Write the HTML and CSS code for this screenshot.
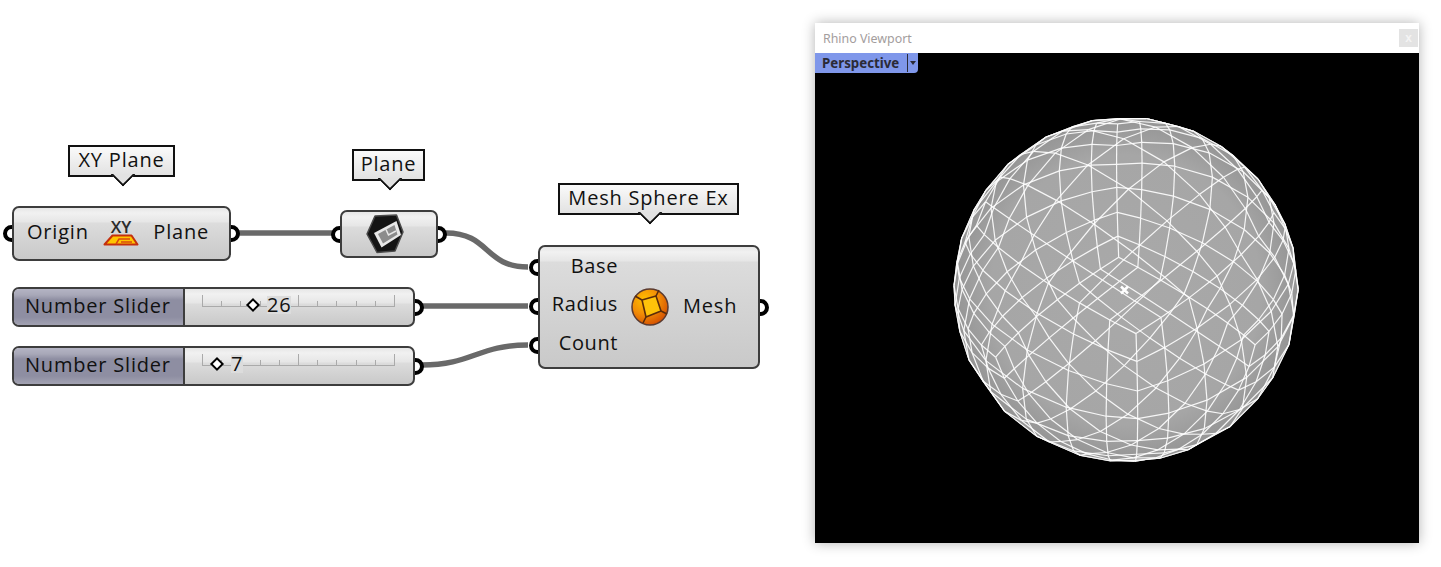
FILE: index.html
```html
<!DOCTYPE html>
<html lang="en">
<head>
    <meta charset="UTF-8">
    <title>Mesh Sphere Ex</title>
    <link rel="stylesheet" href="styles.css">
</head>
<body>
<div class="stage">
    <!-- Wires -->
    <svg class="wires" width="800" height="567" viewBox="0 0 800 567">
        <path d="M238 233 H332"/>
        <path d="M446 233 C490 233 484 267 528 267"/>
        <path d="M422 306 H528"/>
        <path d="M422 365 C472 365 478 345 528 345"/>
    </svg>

    <!-- XY Plane -->
    <div class="tip tip-xy"><span class="label">XY Plane</span></div>
    <div class="node node-xy">
        <span class="port port-in"></span>
        <span class="port port-out"></span>
        <span class="label">Origin</span>
        <div class="xy-icon">
            <span class="xy-letters">XY</span>
            <svg width="36" height="12" viewBox="0 0 36 12">
                <path d="M9.5 1.5 H28.5 L34.5 10.5 H1.5 Z" fill="#ffc400" stroke="#c5300c" stroke-width="2" stroke-linejoin="round"/>
                <path d="M13 10 L16 5 H27 M18 8 H29" fill="none" stroke="#d9480f" stroke-width="1.5"/>
            </svg>
        </div>
        <span class="label">Plane</span>
    </div>

    <!-- Plane -->
    <div class="tip tip-plane"><span class="label">Plane</span></div>
    <div class="node node-plane">
        <span class="port port-in"></span>
        <span class="port port-out"></span>
        <svg width="38" height="40" viewBox="0 0 38 40">
            <path d="M9 2 L30.5 1 L37 18 L29 37 L11 38.5 L1 20 Z" fill="#141414" stroke="#4a4a4a" stroke-width="1.5" stroke-linejoin="round"/>
            <path d="M8 19 L30.5 7 L35 21 L15.5 33.5 Z" fill="#e8e8e8"/>
            <path d="M12 20 L28.5 11 L31.5 20.5 L17 29.5 Z" fill="#8c8c8c"/>
            <path d="M20 15.5 L22.5 21 L30 17" fill="none" stroke="#e8e8e8" stroke-width="1.5"/>
        </svg>
    </div>

    <!-- Mesh Sphere Ex -->
    <div class="tip tip-mesh"><span class="label">Mesh Sphere Ex</span></div>
    <div class="node node-mesh">
        <span class="port port-in port-base"></span>
        <span class="port port-in port-radius"></span>
        <span class="port port-in port-count"></span>
        <span class="port port-out"></span>
        <div class="inputs">
            <span>Base</span>
            <span>Radius</span>
            <span>Count</span>
        </div>
        <svg class="mesh-icon" width="40" height="40" viewBox="0 0 40 40">
            <defs>
                <radialGradient id="ball" cx="35%" cy="30%" r="80%">
                    <stop offset="0" stop-color="#ffc000"/>
                    <stop offset="0.5" stop-color="#f28c06"/>
                    <stop offset="1" stop-color="#cf4600"/>
                </radialGradient>
            </defs>
            <circle cx="20" cy="20" r="18" fill="url(#ball)" stroke="#5a3a30" stroke-width="1.5"/>
            <path d="M12 13 L26 9 L31 24 L16 30 Z" fill="#ffc30a" stroke="#5b2c0a" stroke-width="1.6" stroke-linejoin="round"/>
            <path d="M12 13 L5 9 M26 9 L29 3 M31 24 L37 27 M16 30 L13 36" stroke="#5b2c0a" stroke-width="1.6"/>
        </svg>
        <span class="label output">Mesh</span>
    </div>

    <!-- Number sliders -->
    <div class="node slider slider-radius">
        <span class="port port-out"></span>
        <div class="slider-name"><span class="label">Number Slider</span></div>
        <div class="slider-track">
            <div class="ticks">
                <i class="major"></i><i></i><i></i><i></i><i></i><i class="major"></i><i></i><i></i><i></i><i></i><i class="major"></i>
            </div>
            <div class="thumb" style="left:62px">
                <b class="diamond"></b><span>26</span>
            </div>
        </div>
    </div>
    <div class="node slider slider-count">
        <span class="port port-out"></span>
        <div class="slider-name"><span class="label">Number Slider</span></div>
        <div class="slider-track">
            <div class="ticks">
                <i class="major"></i><i></i><i></i><i></i><i></i><i class="major"></i><i></i><i></i><i></i><i></i><i class="major"></i>
            </div>
            <div class="thumb" style="left:26px">
                <b class="diamond"></b><span>7</span>
            </div>
        </div>
    </div>

    <!-- Viewport window -->
    <div class="viewport">
        <div class="title-bar">
            <span>Rhino Viewport</span>
            <button class="close">x</button>
        </div>
        <div class="view">
            <div class="view-tab">
                <span class="view-name">Perspective</span>
                <span class="view-arrow"></span>
            </div>
            <svg id="sphere" class="sphere" width="604" height="490" viewBox="0 0 604 490"></svg>
        </div>
    </div>
</div>
<script src="sphere.js"></script>
</body>
</html>
```

FILE: styles.css
```css
* {
    box-sizing: border-box;
}

html, body {
    margin: 0;
    padding: 0;
    background-color: #fff;
}

.stage {
    position: relative;
    isolation: isolate;
    width: 1441px;
    height: 567px;
    overflow: hidden;
    font-family: "Open Sans", Arial, sans-serif;
    font-size: 20px;
    letter-spacing: 0.8px;
    color: #111;
}

/* Open Sans sits low, lift the labels to the middle */
.label {
    margin-bottom: 4px;
}

.wires {
    position: absolute;
    left: 0;
    top: 0;
    z-index: -2;
}

.wires path {
    fill: none;
    stroke: #696969;
    stroke-width: 5.5;
}

/* Tooltips */
.tip {
    position: absolute;
    display: flex;
    align-items: center;
    justify-content: center;
    height: 32px;
    border: 2px solid #111;
    background: linear-gradient(#fafafa, #e2e2e2);
}

.tip::after {
    content: "";
    position: absolute;
    left: 50%;
    bottom: -8px;
    width: 16px;
    height: 16px;
    margin-left: -8px;
    border-right: 2px solid #111;
    border-bottom: 2px solid #111;
    background: #e2e2e2;
    clip-path: polygon(100% 0, 100% 100%, 0 100%);
    transform: rotate(45deg);
}

.tip-xy { left: 68px; top: 145px; width: 107px; }
.tip-plane { left: 352px; top: 149px; width: 73px; }
.tip-mesh { left: 558px; top: 183px; width: 181px; }

/* Nodes */
.node {
    position: absolute;
    display: flex;
    align-items: center;
    border: 2px solid #3d3d3d;
    border-radius: 7px;
    background: linear-gradient(#e6e6e6, #f1f1f1 5px, #e6e6e6 14px, #dcdcdc 15px, #c9c9c9);
}

.node-xy {
    left: 12px;
    top: 206px;
    width: 219px;
    height: 55px;
    justify-content: space-between;
    padding: 0 20px 0 13px;
}

.node-plane {
    left: 340px;
    top: 210px;
    width: 98px;
    height: 48px;
    justify-content: center;
    padding-right: 9px;
}

.node-mesh {
    left: 538px;
    top: 245px;
    width: 222px;
    height: 124px;
    padding-left: 12px;
}

.inputs {
    display: flex;
    flex-direction: column;
    align-items: flex-end;
    width: 66px;
    margin-bottom: 5px;
    line-height: 38.5px;
    letter-spacing: 0.6px;
}

.mesh-icon {
    margin-left: 12px;
}

.output {
    margin-left: 13px;
}

/* Ports sit half under the node */
.port {
    position: absolute;
    top: 50%;
    z-index: -1;
    width: 17px;
    height: 17px;
    margin-top: -8.5px;
    border: 4px solid #000;
    border-radius: 50%;
    background-color: #fff;
}

.port-in { left: -11px; }
.port-out { right: -11px; }
.port-base { top: 20px; }
.port-radius { top: 59px; }
.port-count { top: 98px; }

.xy-icon {
    display: flex;
    flex-direction: column;
    align-items: center;
    width: 36px;
    margin-top: -2px;
}

.xy-letters {
    font-size: 17px;
    font-weight: 600;
    line-height: 14px;
    letter-spacing: 0;
    color: #2b2b2b;
}

/* Sliders */
.slider {
    left: 12px;
    width: 403px;
    height: 40px;
    align-items: stretch;
}

.slider-radius { top: 287px; }
.slider-count { top: 346px; }

.slider-name {
    display: flex;
    align-items: center;
    width: 171px;
    padding-left: 11px;
    border-right: 2px solid #3d3d3d;
    border-radius: 5px 0 0 5px;
    background: linear-gradient(#b4b4c4, #a8a8b8 6px, #8e8ea2 11px, #8e8ea2 28px, #a2a2b2);
}

.slider-track {
    position: relative;
    flex: 1;
}

.ticks {
    position: absolute;
    left: 17px;
    right: 18px;
    top: 7px;
    height: 11px;
    display: flex;
    align-items: flex-end;
    justify-content: space-between;
    border-bottom: 1px solid #aaa;
}

.ticks i {
    width: 1px;
    height: 5px;
    background-color: #aaa;
}

.ticks i.major {
    height: 11px;
}

.thumb {
    position: absolute;
    top: 0;
    display: flex;
    align-items: center;
    gap: 9px;
    height: 32px;
    line-height: 32px;
}

.thumb span {
    background-color: #dcdcdc;
    height: 18px;
    line-height: 17px;
}

.diamond {
    width: 10px;
    height: 10px;
    margin-left: 1px;
    border: 2.5px solid #000;
    background-color: #fff;
    transform: rotate(45deg);
}

/* Viewport */
.viewport {
    position: absolute;
    left: 815px;
    top: 23px;
    width: 604px;
    height: 520px;
    letter-spacing: 0;
    background-color: #fff;
    box-shadow: 0 0 12px rgba(0, 0, 0, 0.3);
}

.title-bar {
    display: flex;
    align-items: center;
    justify-content: space-between;
    height: 30px;
    padding: 0 1px 0 8px;
    font-family: "Noto Sans", Arial, sans-serif;
    font-size: 12.4px;
    color: #a39d9d;
}

.close {
    width: 19px;
    height: 18px;
    padding: 0;
    border: none;
    background-color: #e3e3e3;
    color: #f4f4f4;
    font: bold 12px "Liberation Sans", sans-serif;
}

.view {
    position: relative;
    height: 490px;
    background-color: #000;
}

.view-tab {
    position: absolute;
    left: 0;
    top: 0;
    display: flex;
    align-items: center;
    width: 103px;
    height: 20px;
    padding-left: 7px;
    border-bottom-right-radius: 4px;
    background-color: #7f97ea;
    font-family: "Noto Sans", Arial, sans-serif;
    font-size: 13.3px;
    font-weight: 700;
    color: #2b2b36;
}

.view-name {
    width: 86px;
    border-right: 1px solid #2b2b36;
}

.view-arrow {
    width: 0;
    height: 0;
    margin-left: 2px;
    border-left: 3.5px solid transparent;
    border-right: 3.5px solid transparent;
    border-top: 4px solid #2b2b36;
}

.sphere {
    display: block;
}

.sphere line {
    stroke: #fff;
    stroke-width: 1.2;
    stroke-opacity: 0.9;
}

.sphere .marker {
    stroke: #fff;
    stroke-width: 2.5;
    fill: none;
}
```

FILE: sphere.js
```js
// Draws the cube-sphere mesh: 7 x 7 quads on each cube face, seen in perspective
const svg = document.getElementById("sphere");
const NS = "http://www.w3.org/2000/svg";
const COUNT = 7;
const RADIUS = 170;
const FOCAL = 1070;
const CX = 311, CY = 236.5;
const AZIMUTH = 41.5 * Math.PI / 180;
const ELEVATION = 48 * Math.PI / 180;

const ca = Math.cos(AZIMUTH), sa = Math.sin(AZIMUTH);
const ce = Math.cos(ELEVATION), se = Math.sin(ELEVATION);
const toCamera = [ce * ca, ce * sa, se];
const right = [-sa, ca, 0];
const up = [-se * ca, -se * sa, ce];

function dot(a, b) {
    return a[0] * b[0] + a[1] * b[1] + a[2] * b[2];
}

function project(p) {
    const len = Math.sqrt(dot(p, p));
    const q = p.map(v => v / len * RADIUS);
    const s = FOCAL / (FOCAL - dot(q, toCamera));
    return [CX + dot(q, right) * s, CY - dot(q, up) * s];
}

// point on a face: axis is the fixed cube axis, sign its side
function facePoint(axis, sign, i, j) {
    const p = [0, 0, 0];
    p[axis] = sign;
    p[(axis + 1) % 3] = i / COUNT * 2 - 1;
    p[(axis + 2) % 3] = j / COUNT * 2 - 1;
    return project(p);
}

function fmt(pt) {
    return pt[0].toFixed(1) + "," + pt[1].toFixed(1);
}

function add(name, attrs, parent) {
    const el = document.createElementNS(NS, name);
    for (const k in attrs) el.setAttribute(k, attrs[k]);
    (parent || svg).appendChild(el);
    return el;
}

const defs = add("defs", {});
const grad = add("radialGradient", {
    id: "shade", gradientUnits: "userSpaceOnUse", cx: CX, cy: CY, r: RADIUS + 3
}, defs);
add("stop", { offset: "0", "stop-color": "#a9a9a9" }, grad);
add("stop", { offset: "0.78", "stop-color": "#a6a6a6" }, grad);
add("stop", { offset: "1", "stop-color": "#949494" }, grad);

const seen = new Set();
const segments = [];

function segment(a, b) {
    const key = [fmt(a), fmt(b)].sort().join(" ");
    if (seen.has(key)) return;
    seen.add(key);
    segments.push([a, b]);
}

for (let axis = 0; axis < 3; axis++) {
    for (const sign of [-1, 1]) {
        for (let i = 0; i <= COUNT; i++) {
            for (let j = 0; j <= COUNT; j++) {
                const p = facePoint(axis, sign, i, j);
                if (i < COUNT && j < COUNT) {
                    const pts = [p, facePoint(axis, sign, i + 1, j), facePoint(axis, sign, i + 1, j + 1), facePoint(axis, sign, i, j + 1)];
                    add("polygon", { points: pts.map(fmt).join(" "), fill: "url(#shade)", stroke: "url(#shade)", "stroke-width": 1 });
                }
                if (i < COUNT) segment(p, facePoint(axis, sign, i + 1, j));
                if (j < COUNT) segment(p, facePoint(axis, sign, i, j + 1));
            }
        }
    }
}

segments.forEach(s => add("line", { x1: s[0][0], y1: s[0][1], x2: s[1][0], y2: s[1][1] }));

// origin marker in the middle of the sphere
add("path", { class: "marker", d: `M${CX - 5} ${CY - 3} l7 7 m0 -7 l-7 7` });
```
